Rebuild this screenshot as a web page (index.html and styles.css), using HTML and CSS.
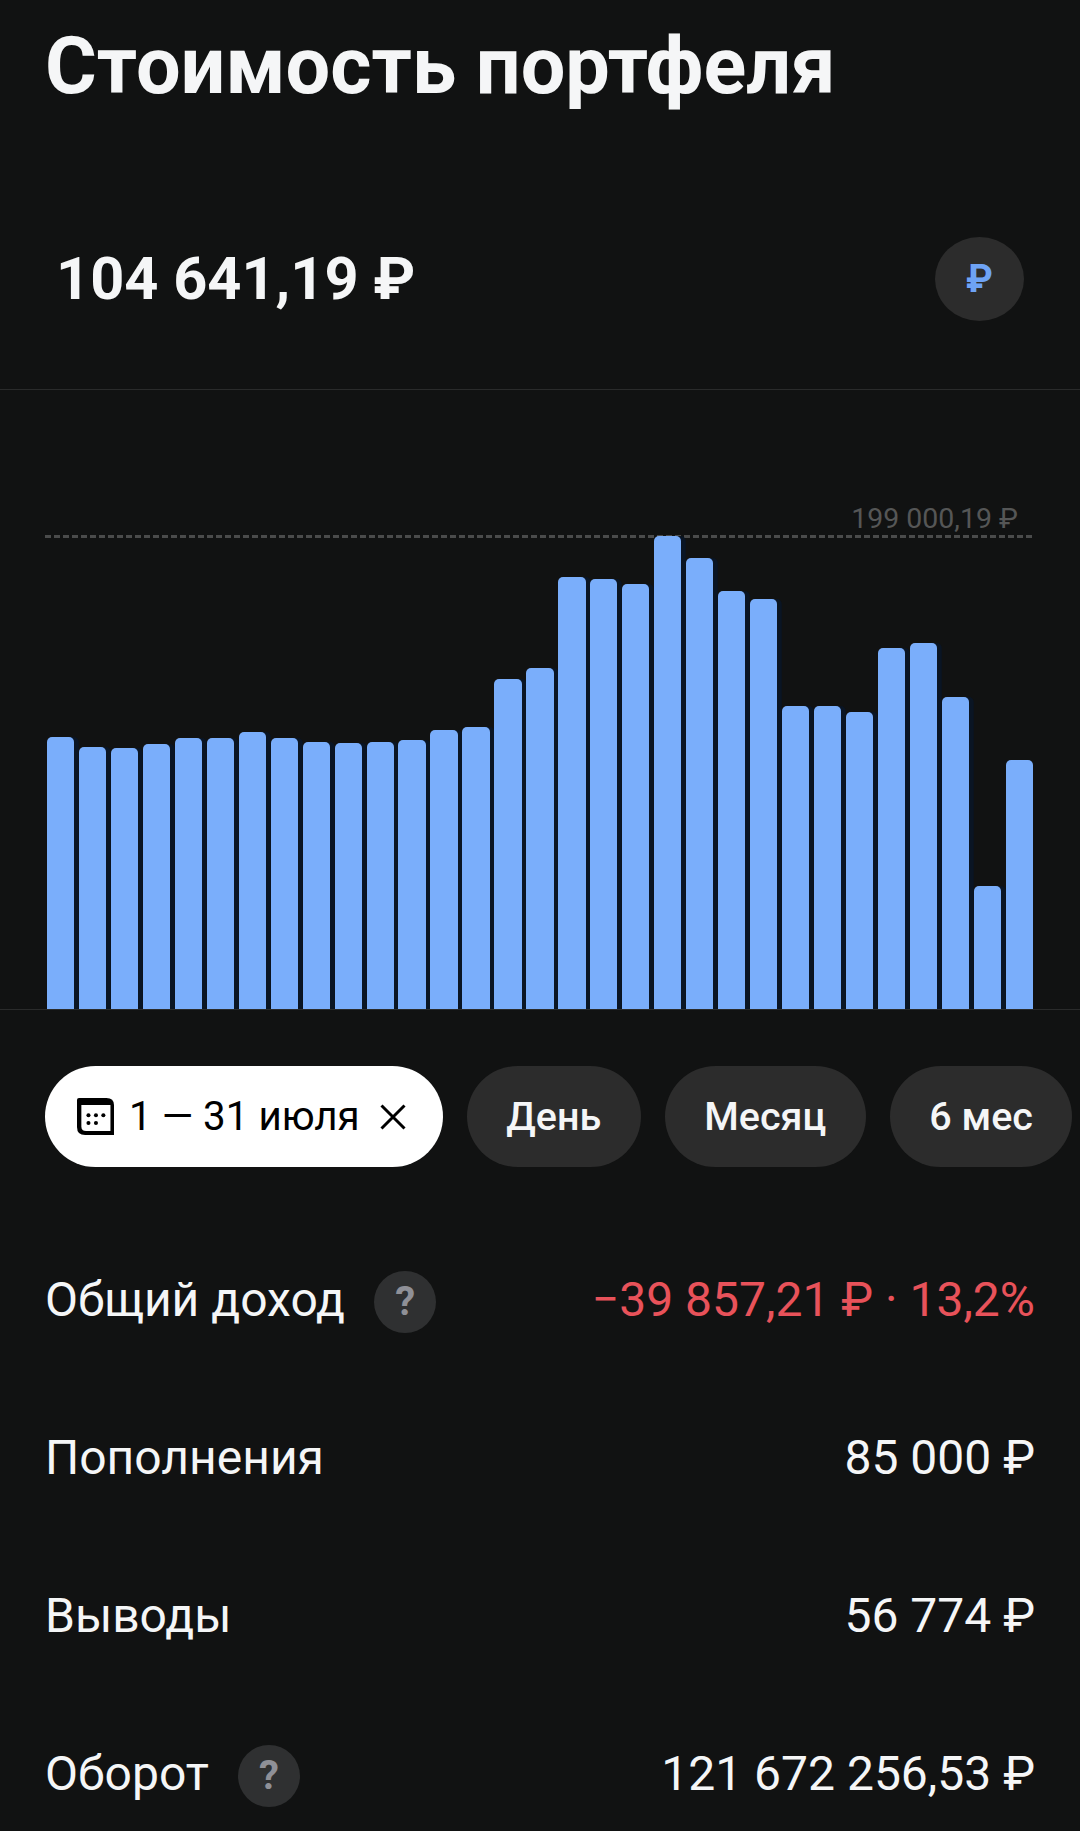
FILE: index.html
```html
<!DOCTYPE html>
<html lang="ru">
<head>
    <meta charset="UTF-8">
    <meta name="viewport" content="width=device-width, initial-scale=1.0">
    <title>Стоимость портфеля</title>
    <link rel="stylesheet" href="styles.css">
</head>
<body>
    <h1 class="page-title">Стоимость портфеля</h1>

    <div class="balance">
        <div class="balance-value">104 641,19 ₽</div>
        <div class="currency-btn">₽</div>
    </div>

    <div class="chart">
        <div class="chart-max">199 000,19 ₽</div>
        <div class="chart-line"></div>
        <div class="chart-bars">
            <div class="bar" style="height: 272px"></div>
            <div class="bar" style="height: 262px"></div>
            <div class="bar" style="height: 261px"></div>
            <div class="bar" style="height: 265px"></div>
            <div class="bar" style="height: 271px"></div>
            <div class="bar" style="height: 271px"></div>
            <div class="bar" style="height: 277px"></div>
            <div class="bar" style="height: 271px"></div>
            <div class="bar" style="height: 267px"></div>
            <div class="bar" style="height: 266px"></div>
            <div class="bar" style="height: 267px"></div>
            <div class="bar" style="height: 269px"></div>
            <div class="bar" style="height: 279px"></div>
            <div class="bar" style="height: 282px"></div>
            <div class="bar" style="height: 330px"></div>
            <div class="bar" style="height: 341px"></div>
            <div class="bar" style="height: 432px"></div>
            <div class="bar" style="height: 430px"></div>
            <div class="bar" style="height: 425px"></div>
            <div class="bar" style="height: 473px"></div>
            <div class="bar" style="height: 451px"></div>
            <div class="bar" style="height: 418px"></div>
            <div class="bar" style="height: 410px"></div>
            <div class="bar" style="height: 303px"></div>
            <div class="bar" style="height: 303px"></div>
            <div class="bar" style="height: 297px"></div>
            <div class="bar" style="height: 361px"></div>
            <div class="bar" style="height: 366px"></div>
            <div class="bar" style="height: 312px"></div>
            <div class="bar" style="height: 123px"></div>
            <div class="bar" style="height: 249px"></div>
        </div>
    </div>

    <div class="chips">
        <div class="chip chip-active">
            <svg class="chip-icon" viewBox="0 0 36.5 36.5" width="37" height="37">
                <path d="M2 0H29Q36.5 0 36.5 7V36.5H8Q0 36.5 0 28.5V2Q0 0 2 0Z" fill="#000"/>
                <path d="M4.3 7H33V32.5H9Q4.3 32.5 4.3 28Z" fill="#fff"/>
                <circle cx="11.3" cy="17" r="2" fill="#000"/>
                <circle cx="18.7" cy="17" r="2" fill="#000"/>
                <circle cx="26" cy="17" r="2" fill="#000"/>
                <circle cx="11.3" cy="24.7" r="2" fill="#000"/>
                <circle cx="18.7" cy="24.7" r="2" fill="#000"/>
            </svg>
            <span>1 — 31 июля</span>
            <svg class="chip-close" viewBox="0 0 26 26" width="26" height="26">
                <path d="M1.5 1.5L24.5 24.5M24.5 1.5L1.5 24.5" stroke="#000" stroke-width="3" fill="none"/>
            </svg>
        </div>
        <div class="chip">День</div>
        <div class="chip">Месяц</div>
        <div class="chip">6 мес</div>
    </div>

    <div class="stats">
        <div class="stat-row">
            <div class="stat-label">Общий доход <span class="help">?</span></div>
            <div class="stat-value negative">−39 857,21 ₽ · 13,2%</div>
        </div>
        <div class="stat-row">
            <div class="stat-label">Пополнения</div>
            <div class="stat-value">85 000 ₽</div>
        </div>
        <div class="stat-row">
            <div class="stat-label">Выводы</div>
            <div class="stat-value">56 774 ₽</div>
        </div>
        <div class="stat-row">
            <div class="stat-label">Оборот <span class="help">?</span></div>
            <div class="stat-value">121 672 256,53 ₽</div>
        </div>
    </div>
</body>
</html>
```

FILE: styles.css
```css
body {
    margin: 0;
    height: 1831px;
    overflow: hidden;
    background-color: #111212;
    color: #f5f6f7;
    font-family: Roboto, "DejaVu Sans", sans-serif;
}

.page-title {
    margin: 0;
    padding: 18px 0 0 45px;
    height: 115px;
    font-size: 79.2px;
    line-height: 96px;
    font-weight: 700;
    box-sizing: border-box;
}

.balance {
    display: flex;
    justify-content: space-between;
    align-items: center;
    height: 275px;
    padding: 54px 56px 0;
    border-bottom: 1px solid #2a2b2b;
    box-sizing: border-box;
}

.balance-value {
    font-size: 59.5px;
    font-weight: 700;
}

.currency-btn {
    display: flex;
    align-items: center;
    justify-content: center;
    width: 89px;
    height: 84px;
    border-radius: 50%;
    background-color: #2c2c2c;
    color: #6ea3f5;
    font-size: 38px;
    font-weight: 700;
}

.chart {
    height: 620px;
    padding-top: 112px;
    border-bottom: 1px solid #2a2b2b;
    box-sizing: border-box;
}

.chart-max {
    margin-right: 62px;
    text-align: right;
    font-size: 28.5px;
    line-height: 33px;
    color: #555656;
}

.chart-line {
    height: 3px;
    margin: 0 47px 0 45px;
    background: repeating-linear-gradient(90deg, #4a4b4b 0 6px, transparent 6px 9px);
}

.chart-bars {
    display: flex;
    align-items: flex-end;
    gap: 4.7px;
    height: 471px;
    padding: 0 47px;
}

.bar {
    flex: 1;
    background-color: #7aaefb;
    border-radius: 5px 5px 0 0;
    box-shadow: 4.7px 0 0 #0a1524;
}

.bar:last-child {
    box-shadow: none;
}

.chips {
    display: flex;
    gap: 24px;
    padding: 56px 0 0 45px;
}

.chip {
    display: flex;
    align-items: center;
    height: 101px;
    padding: 0 39.5px;
    border-radius: 51px;
    background-color: #2c2c2c;
    font-size: 39.5px;
    font-weight: 500;
}

.chip-active {
    padding: 0 37px 0 32px;
    background-color: #fff;
    color: #000;
    font-size: 40.3px;
    font-weight: 400;
}

.chip-icon {
    margin-right: 15px;
}

.chip-close {
    margin-left: 20px;
}

.stats {
    padding: 53px 45px 0;
}

.stat-row {
    display: flex;
    justify-content: space-between;
    align-items: center;
    height: 158px;
    font-size: 48px;
}

.stat-label {
    display: flex;
    align-items: center;
}

.help {
    display: flex;
    align-items: center;
    justify-content: center;
    width: 62px;
    height: 62px;
    margin: 5px 0 0 29px;
    border-radius: 50%;
    background-color: #2f3031;
    color: #8f9097;
    font-size: 40px;
    font-weight: 700;
}

.negative {
    color: #e8525a;
}
```
